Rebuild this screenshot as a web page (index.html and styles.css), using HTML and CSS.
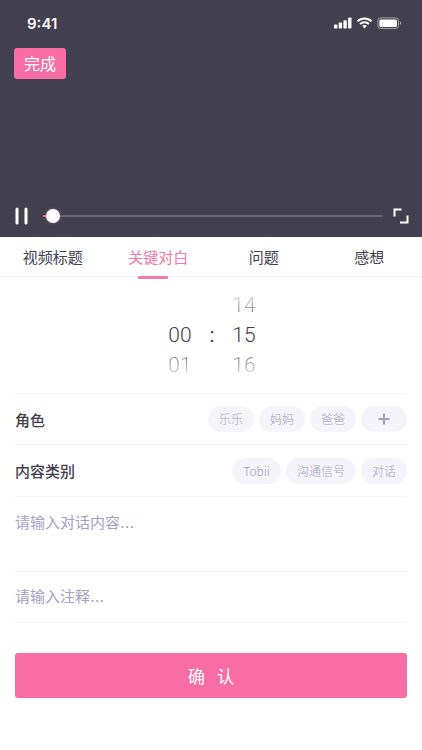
FILE: index.html
```html
<!DOCTYPE html>
<html lang="zh-CN">
<head>
<meta charset="utf-8">
<meta name="viewport" content="width=device-width, initial-scale=1">
<title>关键对白</title>
<link rel="stylesheet" href="styles.css">
</head>
<body>
<section class="player">
  <div class="status">
    <time class="clock">9:41</time>
    <svg class="status-icons" width="68" height="14" viewBox="0 0 68 14" aria-hidden="true">
      <g fill="#fff">
        <rect x="0" y="8.5" width="3.4" height="4" rx="0.8"/>
        <rect x="4.700" y="6.500" width="3.400" height="6" rx="0.8"/>
        <rect x="9.400" y="4.200" width="3.400" height="8.300" rx="0.8"/>
        <rect x="14.100" y="1.600" width="3.400" height="10.900" rx="0.8"/>
        <path d="M30.5 8.900a3.600 3.600 0 0 1 2.400.9l-2.400 2.700-2.400-2.700a3.600 3.600 0 0 1 2.400-.9z"/>
        <rect x="45.4" y="3.400" width="17.600" height="7.600" rx="1.5"/>
      </g>
      <g fill="none" stroke="#fff" stroke-width="2">
        <path d="M23.400 5.300a10.200 10.200 0 0 1 14.200 0"/>
        <path d="M26 8a6.500 6.500 0 0 1 9 0"/>
      </g>
      <rect x="43.900" y="1.900" width="20.600" height="10.600" rx="2.800" fill="none" stroke="#fff" stroke-opacity=".5"/>
      <path d="M66 5.300c1.500.7 1.500 3.100 0 3.800z" fill="#fff" fill-opacity=".5"/>
    </svg>
  </div>
  <button class="done" type="button">完成</button>
  <div class="controls">
    <button class="icon-button" type="button" aria-label="暂停">
      <svg width="14" height="18" viewBox="0 0 14 18"><path d="M2 2v14M11 2v14" stroke="#fff" stroke-width="3" stroke-linecap="round"/></svg>
    </button>
    <input class="progress" type="range" min="0" max="100" value="1" aria-label="播放进度">
    <button class="icon-button" type="button" aria-label="全屏">
      <svg width="16" height="16" viewBox="0 0 16 16"><path d="M1.500 8.500v-7h7M14.500 7.500v7H7" fill="none" stroke="#fff" stroke-width="2"/></svg>
    </button>
  </div>
</section>

<nav class="tabs">
  <a class="tab" href="#title">视频标题</a>
  <a class="tab tab-active" href="#dialogue" aria-current="page">关键对白</a>
  <a class="tab" href="#question">问题</a>
  <a class="tab" href="#thoughts">感想</a>
</nav>

<form class="form">
  <div class="picker">
    <div class="wheel"><span class="near"></span><span>00</span><span class="near far-down">01</span></div>
    <span class="colon">:</span>
    <div class="wheel"><span class="near far-up">14</span><span>15</span><span class="near far-down">16</span></div>
  </div>
  <div class="row">
    <h2 class="label">角色</h2>
    <div class="chips">
      <button class="chip" type="button">乐乐</button>
      <button class="chip" type="button">妈妈</button>
      <button class="chip" type="button">爸爸</button>
      <button class="chip" type="button" aria-label="添加角色">
        <svg class="plus" width="24" height="12" viewBox="0 0 24 12"><path d="M12 .5v11M6.500 6h11" stroke="#a29ebf" stroke-width="2"/></svg>
      </button>
    </div>
  </div>
  <div class="row">
    <h2 class="label">内容类别</h2>
    <div class="chips">
      <button class="chip" type="button">Tobii</button>
      <button class="chip" type="button">沟通信号</button>
      <button class="chip" type="button">对话</button>
    </div>
  </div>
  <textarea class="field field-tall" placeholder="请输入对话内容..." aria-label="对话内容"></textarea>
  <input class="field" type="text" placeholder="请输入注释..." aria-label="注释">
  <button class="confirm" type="submit"><span>确</span><span>认</span></button>
</form>
</body>
</html>
```
FILE: styles.css
```css
* {
  box-sizing: border-box;
}

body {
  margin: 0;
  background: #fff;
  color: #42404f;
  font-family: "Noto Sans CJK SC", sans-serif;
  font-size: 15px;
}

button,
input,
textarea {
  margin: 0;
  border: 0;
  font: inherit;
}

button {
  padding: 0;
  cursor: pointer;
}

svg {
  display: block;
}

/* Video player */
.player {
  display: flex;
  flex-direction: column;
  align-items: flex-start;
  height: 237px;
  padding: 12px 13px 12px 14px;
  background: #42404f;
}

.status {
  display: flex;
  justify-content: space-between;
  align-items: center;
  align-self: stretch;
  height: 22px;
  padding: 0 7px 0 13px;
}

.clock {
  color: #fff;
  font-family: Inter, sans-serif;
  font-size: 15px;
  font-weight: 600;
}

.done {
  width: 52px;
  height: 31px;
  margin-top: 14px;
  border-radius: 3px;
  background: #f76da4;
  color: #fff;
  font-size: 16px;
  line-height: 31px;
}

.controls {
  display: flex;
  align-items: center;
  align-self: stretch;
  gap: 10px;
  height: 18px;
  margin-top: auto;
  padding-left: 1px;
}

.icon-button {
  background: none;
}

.controls .icon-button:first-child {
  margin-right: 4px;
}

.progress {
  flex: 1;
  min-width: 0;
  height: 14px;
  appearance: none;
  background: none;
}

.progress::-webkit-slider-runnable-track {
  height: 2px;
  border-radius: 1px;
  background: linear-gradient(to right, #f76da4 8px, #686474 8px);
}

.progress::-webkit-slider-thumb {
  width: 14px;
  height: 14px;
  margin-top: -6px;
  appearance: none;
  border-radius: 50%;
  background: #fff;
  box-shadow: 0 0 3px rgba(247, 109, 164, 0.5);
}

/* Tabs */
.tabs {
  display: grid;
  grid-template-columns: repeat(4, 1fr);
  height: 40px;
  border-bottom: 1px solid #f4f4f6;
}

.tab {
  position: relative;
  color: inherit;
  line-height: 40px;
  text-align: center;
  text-decoration: none;
}

.tab-active {
  color: #f07aa8;
}

.tab-active::after {
  content: "";
  position: absolute;
  bottom: -2px;
  left: calc(50% - 20px);
  width: 30px;
  height: 3px;
  border-radius: 1px;
  background: #f07aa8;
}

/* Form */
.form {
  padding: 0 15px;
}

.picker {
  display: flex;
  justify-content: center;
  align-items: center;
  height: 116px;
  padding-left: 2px;
  font-family: Roboto, sans-serif;
  font-size: 21px;
  font-weight: 300;
}

.wheel {
  display: grid;
  grid-template-rows: repeat(3, 30px);
  width: 24px;
  line-height: 30px;
  text-align: center;
}

.colon {
  width: 40px;
  font-weight: 400;
  text-align: center;
}

.near {
  background-clip: text;
  color: transparent;
}

.far-up {
  background-image: linear-gradient(to top, #85848d 20%, #d4d4d8 80%);
}

.far-down {
  background-image: linear-gradient(to bottom, #85848d 20%, #d4d4d8 80%);
}

.row {
  display: flex;
  justify-content: space-between;
  align-items: center;
  height: 51px;
  border-top: 1px solid #f4f4f6;
}

.row + .row {
  height: 52px;
}

.label {
  margin: 0;
  font-size: 15px;
  font-weight: 500;
}

.chips {
  display: flex;
  gap: 5px;
}

.chip {
  height: 26px;
  padding: 0 11px;
  border-radius: 13px;
  background: #f5f4fa;
  color: #a29ebf;
  font-size: 12px;
  font-weight: 300;
  line-height: 26px;
}

.field {
  display: block;
  width: 100%;
  height: 51px;
  padding: 0;
  border-bottom: 1px solid #f4f4f6;
  outline: 0;
  background: none;
  color: inherit;
  font-family: "DejaVu Sans", "Noto Sans CJK SC", sans-serif;
}

.field-tall {
  height: 76px;
  padding-top: 14px;
  border-top: 1px solid #f4f4f6;
  resize: none;
}

.field::placeholder {
  color: #a5a1c2;
}

.confirm {
  display: flex;
  justify-content: center;
  align-items: center;
  gap: 12px;
  width: 100%;
  height: 45px;
  margin-top: 30px;
  border-radius: 3px;
  background: #f76da4;
  color: #fff;
  font-size: 17px;
  line-height: 24px;
}
```
